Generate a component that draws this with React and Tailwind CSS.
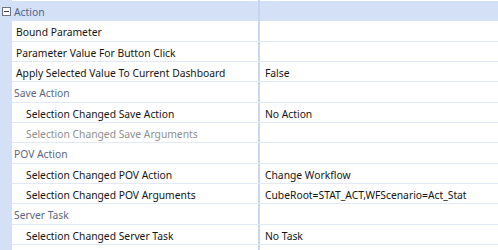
const rows = [
  { type: 'prop', name: 'Bound Parameter', value: '', indent: 0 },
  { type: 'prop', name: 'Parameter Value For Button Click', value: '', indent: 0 },
  { type: 'prop', name: 'Apply Selected Value To Current Dashboard', value: 'False', indent: 0 },
  { type: 'cat', name: 'Save Action' },
  { type: 'prop', name: 'Selection Changed Save Action', value: 'No Action', indent: 1 },
  { type: 'prop', name: 'Selection Changed Save Arguments', value: '', indent: 1, disabled: true },
  { type: 'cat', name: 'POV Action' },
  { type: 'prop', name: 'Selection Changed POV Action', value: 'Change Workflow', indent: 1 },
  { type: 'prop', name: 'Selection Changed POV Arguments', value: 'CubeRoot=STAT_ACT,WFScenario=Act_Stat', indent: 1 },
  { type: 'cat', name: 'Server Task' },
  { type: 'prop', name: 'Selection Changed Server Task', value: 'No Task', indent: 1 },
  { type: 'prop', name: 'Selection Changed Server Task Arguments', value: '', indent: 1, disabled: true },
]

function Row({ row }) {
  if (row.type === 'cat') {
    return (
      <div className="flex h-[20.33px]">
        <div className="w-[12px] shrink-0 bg-[#d4e0f5]" />
        <div className="flex flex-1 border-b border-[#e2e9f6] bg-white">
          <div className="w-[246px] shrink-0 pl-[2px] pt-[2px] text-[#5a6680]">{row.name}</div>
          <div className="w-[2px] shrink-0 bg-[#c8d7ef]" />
          <div className="flex-1" />
        </div>
      </div>
    )
  }
  return (
    <div className="flex h-[20.33px]">
      <div className="w-[12px] shrink-0 bg-[#d4e0f5]" />
      <div className="flex flex-1 border-b border-[#e2e9f6] bg-white">
        <div
          className={
            'w-[246px] shrink-0 overflow-hidden whitespace-nowrap pt-[2px] ' +
            (row.indent ? 'pl-[14px] ' : 'pl-[4px] ') +
            (row.disabled ? 'text-[#8f8f8f]' : 'text-[#141414]')
          }
        >
          {row.name}
        </div>
        <div className="w-[2px] shrink-0 bg-[#c8d7ef]" />
        <div className="flex-1 overflow-hidden whitespace-nowrap pl-[5px] pt-[2px] text-[#141414]">{row.value}</div>
      </div>
    </div>
  )
}

export default function App() {
  return (
    <div className="h-[250px] w-[498px] overflow-hidden bg-white font-['Noto_Sans',sans-serif] text-[10.3px] leading-[18px]">
      <div className="flex h-[1px]">
        <div className="w-[12px] bg-[#d4e0f5]" />
        <div className="w-[246px]" />
        <div className="w-[2px] bg-[#c8d7ef]" />
      </div>
      <div className="flex h-[20.33px] bg-[#d4e0f5]">
        <div className="flex w-[12px] shrink-0 items-center justify-center">
          <div className="relative h-[9px] w-[9px] border border-[#6e7480] bg-white">
            <div className="absolute left-[1px] top-[3px] h-[1px] w-[5px] bg-[#3b3f46]" />
          </div>
        </div>
        <div className="w-[246px] shrink-0 pl-[2px] pt-[2px] text-[#4f6590]">Action</div>
        <div className="w-[2px] shrink-0 bg-[#c6d5ee]" />
        <div className="flex-1" />
      </div>
      {rows.map((r) => (
        <Row key={r.name} row={r} />
      ))}
    </div>
  )
}
